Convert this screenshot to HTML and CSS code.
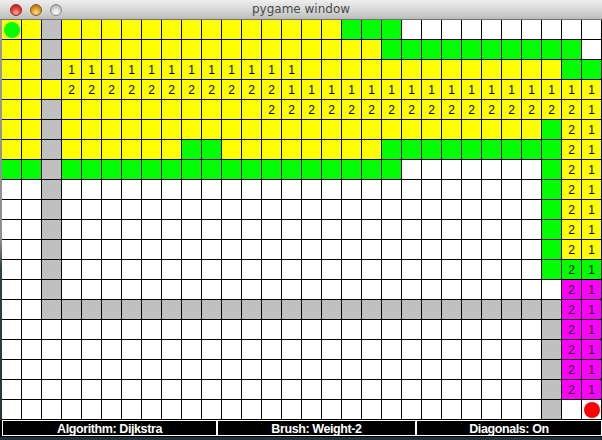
FILE: index.html
```html
<!DOCTYPE html>
<html lang="en">

<head>
    <meta charset="UTF-8">
    <title>pygame window</title>
    <link rel="stylesheet" href="styles.css">
</head>

<body>

    <div id="title_bar">
        <div id="buttons">
            <span class="light red"></span>
            <span class="light orange"></span>
            <span class="light gray"></span>
        </div>
        <div id="title">pygame window</div>
        <div></div>
    </div>

    <div id="board_wrap">
        <div id="frame_left"></div>
        <div id="board"></div>
    </div>

    <div id="status_bar">
        <div class="status" id="status_algo">Algorithm: Dijkstra</div>
        <div class="status" id="status_brush">Brush: Weight-2</div>
        <div class="status" id="status_diag">Diagonals: On</div>
    </div>

    <script>
        // Y open, G visited, W empty, X wall, M path, S start, E end
        var colors = [
            "SYXYYYYYYY YYYYYYYGGG WWWWWWWWWW",
            "YYXYYYYYYY YYYYYYYYYG GGGGGGGGGW",
            "YYXYYYYYYY YYYYYYYYYY YYYYYYYYGG",
            "YYYYYYYYYY YYYYYYYYYY YYYYYYYYYY",
            "YYXYYYYYYY YYYYYYYYYY YYYYYYYYYY",
            "YYXYYYYYYY YYYYYYYYYY YYYYYYYGYY",
            "YYXYYYYYYG GYYYYYYYYG GGGGGGGGYY",
            "GGXGGGGGGG GGGGGGGGGG WWWWWWWGYY",
            "WWXWWWWWWW WWWWWWWWWW WWWWWWWGYY",
            "WWXWWWWWWW WWWWWWWWWW WWWWWWWGYY",
            "WWXWWWWWWW WWWWWWWWWW WWWWWWWGYY",
            "WWXWWWWWWW WWWWWWWWWW WWWWWWWGYY",
            "WWXWWWWWWW WWWWWWWWWW WWWWWWWGGG",
            "WWXWWWWWWW WWWWWWWWWW WWWWWWWWMM",
            "WWXXXXXXXX XXXXXXXXXX XXXXXXXXMM",
            "WWWWWWWWWW WWWWWWWWWW WWWWWWWXMM",
            "WWWWWWWWWW WWWWWWWWWW WWWWWWWXMM",
            "WWWWWWWWWW WWWWWWWWWW WWWWWWWXMM",
            "WWWWWWWWWW WWWWWWWWWW WWWWWWWXMM",
            "WWWWWWWWWW WWWWWWWWWW WWWWWWWXWE"
        ];

        var blank = ".......... .......... ..........";
        var side = ".......... .......... ........21";
        var labels = [
            blank,
            blank,
            "...1111111 11111..... ..........",
            "...2222222 2222111111 1111111111",
            ".......... ...2222222 2222222221",
            side, side, side, side, side, side, side,
            side, side, side, side, side, side, side,
            blank
        ];

        var names = {
            Y: "open", G: "visited", W: "empty", X: "wall",
            M: "path", S: "open", E: "empty"
        };

        var board = document.getElementById("board");

        for (var r = 0; r < colors.length; r++) {
            var row = colors[r].replace(/ /g, "");
            var txt = labels[r].replace(/ /g, "");
            for (var c = 0; c < row.length; c++) {
                var ch = row[c];
                var cell = document.createElement("div");
                cell.className = "cell " + names[ch];
                if (txt[c] != ".") cell.textContent = txt[c];
                if (ch == "S" || ch == "E") {
                    var dot = document.createElement("span");
                    dot.className = ch == "S" ? "dot start" : "dot end";
                    cell.appendChild(dot);
                }
                board.appendChild(cell);
            }
        }
    </script>

</body>

</html>
```

FILE: styles.css
```css
body {
    margin: 0;
    width: 602px;
    background-color: #1f3239;
}

#title_bar {
    display: grid;
    grid-template-columns: 1fr auto 1fr;
    align-items: center;
    height: 19px;
    border-bottom: 1px solid #6f6f6f;
    background: linear-gradient(#eeeeee, #d6d6d6 55%, #bcbcbc);
}

#buttons {
    display: flex;
    gap: 8px;
    padding-left: 10px;
}

.light {
    width: 12px;
    height: 12px;
    border-radius: 50%;
    box-sizing: border-box;
}

.red {
    background: radial-gradient(circle at 50% 75%, #ffb4a6, #e8463d 45%, #b3201a 90%);
    border: 1px solid #8e2a24;
}

.orange {
    background: radial-gradient(circle at 50% 75%, #ffe1a0, #e0a030 45%, #a86a10 90%);
    border: 1px solid #8c5c14;
}

.gray {
    background: radial-gradient(circle at 50% 75%, #ffffff, #d8d8d8 45%, #a2a2a2 90%);
    border: 1px solid #8a8a8a;
}

#title {
    font: 12px "DejaVu Sans", sans-serif;
    line-height: 19px;
    color: #4a4a4a;
}

#board_wrap {
    display: flex;
}

#frame_left {
    width: 2px;
    background: linear-gradient(#9c9c9c, #8e8e8e 55%, #2f3f44 62%, #24363c);
}

#board {
    display: grid;
    grid-template-columns: repeat(30, 20px);
    grid-auto-rows: 20px;
    width: 600px;
}

.cell {
    box-sizing: border-box;
    border-right: 1px solid #000;
    border-bottom: 1px solid #000;
    display: flex;
    align-items: center;
    justify-content: center;
    font: 12px "Liberation Sans", Arial, sans-serif;
    color: #000;
}

.open {
    background-color: #ffff00;
}

.visited {
    background-color: #00ff00;
}

.empty {
    background-color: #ffffff;
}

.wall {
    background-color: #c0c0c0;
}

.path {
    background-color: #ff00ff;
}

.dot {
    width: 16px;
    height: 16px;
    border-radius: 50%;
}

.start {
    background-color: #00ff00;
}

.end {
    background-color: #ff0000;
}

#status_bar {
    display: flex;
    box-sizing: border-box;
    height: 17px;
    padding-left: 2px;
    background-color: #000;
}

.status {
    box-sizing: border-box;
    height: 16px;
    border: 1px solid #fff;
    text-align: center;
    font: bold 12.5px "Liberation Sans", Arial, sans-serif;
    letter-spacing: -0.4px;
    line-height: 16px;
    color: #fff;
}

#status_algo {
    width: 215px;
}

#status_brush {
    width: 199px;
}

#status_diag {
    width: 186px;
}
```
